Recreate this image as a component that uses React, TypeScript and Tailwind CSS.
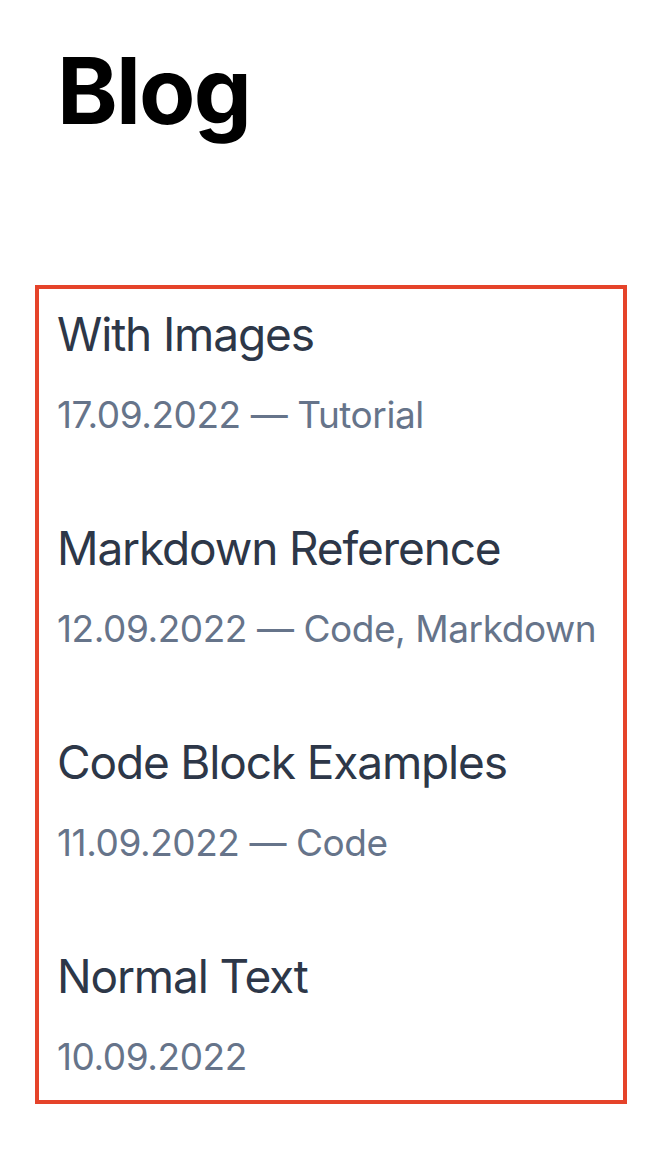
import React from "react";

const posts = [
  { title: "With Images", date: "17.09.2022", tags: "Tutorial" },
  { title: "Markdown Reference", date: "12.09.2022", tags: "Code, Markdown" },
  { title: "Code Block Examples", date: "11.09.2022", tags: "Code" },
  { title: "Normal Text", date: "10.09.2022", tags: "" },
];

export default function App() {
  return (
    <div className="min-h-[1172px] w-full bg-white font-['Inter',sans-serif]">
      <h1 className="pl-[57px] pt-[45px] text-[92px] font-bold leading-none tracking-[-0.02em] text-black">
        Blog
      </h1>

      {/* post list */}
      <ul className="ml-[35px] mt-[148px] w-[592px] border-4 border-[#e5432a] pl-[18px] pr-[10px] pt-[17px] pb-[18px]">
        {posts.map((p) => (
          <li key={p.title} className="mb-[80px] last:mb-0">
            <h2 className="text-[46px] leading-[56px] tracking-[-0.025em] text-[#2d3748]">
              {p.title}
            </h2>
            <p className="mt-[28px] whitespace-nowrap text-[37px] leading-[50px] tracking-[-0.012em] text-[#66748a]">
              {p.date}
              {p.tags && ` — ${p.tags}`}
            </p>
          </li>
        ))}
      </ul>
    </div>
  );
}
